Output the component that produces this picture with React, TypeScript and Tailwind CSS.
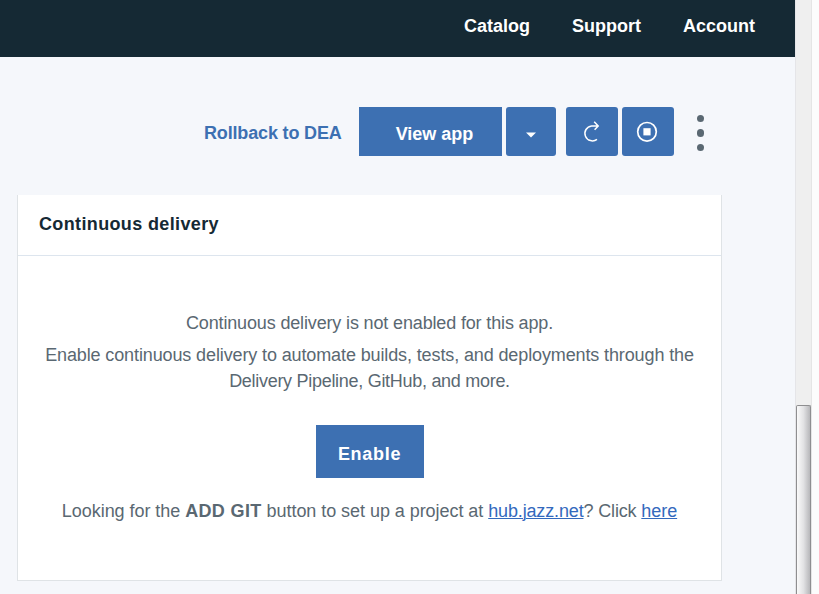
import type { ReactNode } from "react";

const NAV_ITEMS = ["Catalog", "Support", "Account"];

function TopBar() {
  return (
    <header className="flex h-[57px] shrink-0 justify-end bg-[#152934] pr-10">
      <nav className="flex gap-[42px] pt-[13px] text-[18px] leading-[26px] font-bold text-white">
        {NAV_ITEMS.map((item) => (
          <a key={item}>{item}</a>
        ))}
      </nav>
    </header>
  );
}

function IconButton({ label, className, children }: { label: string; className: string; children: ReactNode }) {
  return (
    <button aria-label={label} className={`flex h-[49px] items-center justify-center rounded-[3px] bg-[#3d70b2] ${className}`}>
      {children}
    </button>
  );
}

function Actions() {
  return (
    <div className="flex h-[49px] items-center">
      <a className="ml-[204px] w-[155px] pt-[2px] text-[18px] leading-[26px] font-bold tracking-[-0.16px] whitespace-nowrap text-[#3d70b2]">
        Rollback to DEA
      </a>
      <button className="h-[49px] w-[143px] bg-[#3d70b2] pt-[5px] pl-2 text-[18px] font-bold whitespace-nowrap text-white">
        View app
      </button>
      <IconButton label="More views" className="ml-1 w-[50px]">
        <svg width="10" height="6" viewBox="0 0 10 6" className="mt-[7px]">
          <path d="M0 0.5H10L5 5.5Z" fill="#fff" />
        </svg>
      </IconButton>
      <IconButton label="Restart" className="ml-2.5 w-[52px]">
        <svg width="52" height="49" viewBox="0 0 52 49" fill="none" stroke="#fff" strokeWidth="1.5">
          <path d="M31 32.3A7.5 7.5 0 1 1 25.6 18.9H32.2M28.2 14.8L32.2 18.9L28.6 22.8" />
        </svg>
      </IconButton>
      <IconButton label="Stop" className="ml-1 w-[52px]">
        <svg width="52" height="49" viewBox="0 0 52 49">
          <circle cx="25" cy="24.8" r="9.3" fill="none" stroke="#fff" strokeWidth="1.7" />
          <rect x="21.4" y="21.2" width="7.2" height="7.2" fill="#fff" />
        </svg>
      </IconButton>
      <div className="ml-[23px] flex flex-col gap-[7.3px] pt-[3px]">
        <i className="size-[7.3px] rounded-full bg-[#5a6872]" />
        <i className="size-[7.3px] rounded-full bg-[#5a6872]" />
        <i className="size-[7.3px] rounded-full bg-[#5a6872]" />
      </div>
    </div>
  );
}

function DeliveryCard() {
  return (
    <section className="mt-[39px] ml-[17px] flex h-[386px] w-[705px] flex-col border border-t-0 border-[#dfe3e6] bg-white">
      <h2 className="h-[61px] shrink-0 border-b border-[#dde5ee] pt-4 pl-[21px] text-[18px] leading-[26px] font-bold tracking-[0.36px] text-[#152934]">
        Continuous delivery
      </h2>
      <div className="flex flex-col items-center pt-[54px] text-center text-[18px] leading-[26px] whitespace-nowrap text-[#5a6872]">
        <p className="tracking-[-0.15px]">Continuous delivery is not enabled for this app.</p>
        <p className="mt-[6px] tracking-[-0.12px]">
          Enable continuous delivery to automate builds, tests, and deployments through the
        </p>
        <p className="tracking-[-0.29px]">Delivery Pipeline, GitHub, and more.</p>
        <button className="mt-[31px] h-[53px] w-[108px] bg-[#3d70b2] pt-[4px] text-[18px] font-bold tracking-[0.7px] text-white">
          Enable
        </button>
        <p className="mt-5 tracking-[-0.05px]">
          Looking for the <strong className="tracking-[0.35px]">ADD GIT</strong> button to set up a project at{" "}
          <a className="tracking-[-0.15px] text-[#3369bd] underline decoration-1 underline-offset-1">hub.jazz.net</a>
          <span className="tracking-[-0.15px]">? Click </span>
          <a className="text-[#3369bd] underline decoration-1 underline-offset-1">here</a>
        </p>
      </div>
    </section>
  );
}

function Scrollbar() {
  return (
    <aside className="flex w-6 shrink-0 bg-[#fcfcfc]">
      <div className="flex w-[17px] flex-col border-x border-l-[#e5e5e8] border-r-[#e5e5e5] bg-[#efefef]">
        <div className="h-[405px] shrink-0" />
        <div className="w-[15px] flex-1 rounded-t-[2px] border border-b-0 border-[#8e8e90] bg-linear-to-r from-[#fafafa] via-[#e2e2e4] to-[#b7b7ba]" />
      </div>
    </aside>
  );
}

export default function App() {
  return (
    <div className="flex h-[594px] w-[819px] overflow-hidden bg-[#f5f7fb] font-['Liberation_Sans',Arial,sans-serif]">
      <main className="flex w-[795px] shrink-0 flex-col">
        <TopBar />
        <div className="pt-[50px]">
          <Actions />
          <DeliveryCard />
        </div>
      </main>
      <Scrollbar />
    </div>
  );
}
